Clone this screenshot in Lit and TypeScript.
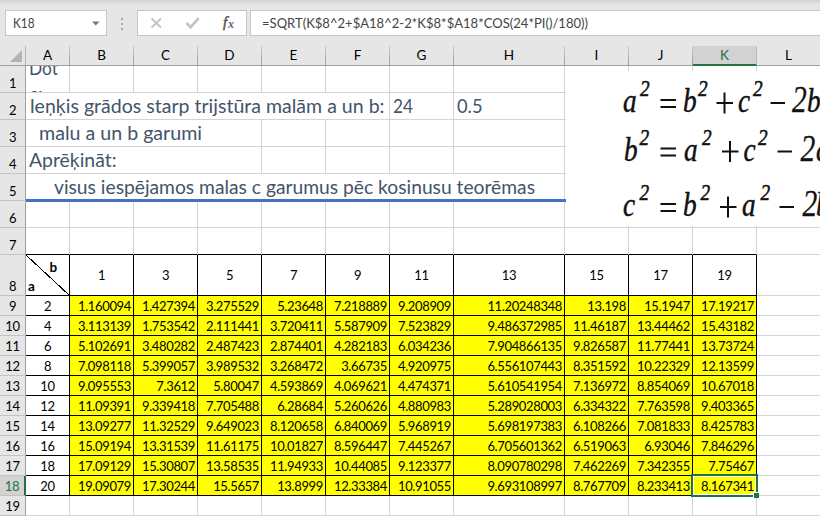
import { LitElement, html, css, svg, nothing } from "lit";
import { customElement, property } from "lit/decorators.js";

const COLS: [string, number][] = [
  ["A", 44], ["B", 64], ["C", 64], ["D", 64], ["E", 64], ["F", 64], ["G", 64],
  ["H", 111], ["I", 64], ["J", 64], ["K", 64], ["L", 64],
];

const HEAD = ["1", "3", "5", "7", "9", "11", "13", "15", "17", "19"];

const DATA = `2 1.160094 1.427394 3.275529 5.23648 7.218889 9.208909 11.20248348 13.198 15.1947 17.19217
4 3.113139 1.753542 2.111441 3.720411 5.587909 7.523829 9.486372985 11.46187 13.44462 15.43182
6 5.102691 3.480282 2.487423 2.874401 4.282183 6.034236 7.904866135 9.826587 11.77441 13.73724
8 7.098118 5.399057 3.989532 3.268472 3.66735 4.920975 6.556107443 8.351592 10.22329 12.13599
10 9.095553 7.3612 5.80047 4.593869 4.069621 4.474371 5.610541954 7.136972 8.854069 10.67018
12 11.09391 9.339418 7.705488 6.28684 5.260626 4.880983 5.289028003 6.334322 7.763598 9.403365
14 13.09277 11.32529 9.649023 8.120658 6.840069 5.968919 5.698197383 6.108266 7.081833 8.425783
16 15.09194 13.31539 11.61175 10.01827 8.596447 7.445267 6.705601362 6.519063 6.93046 7.846296
18 17.09129 15.30807 13.58535 11.94933 10.44085 9.123377 8.090780298 7.462269 7.342355 7.75467
20 19.09079 17.30244 15.5657 13.8999 12.33384 10.91055 9.693108997 8.767709 8.233413 8.167341`
  .split("\n")
  .map((r) => r.split(" "));

/** A line of text set to an exact advance width. */
@customElement("fit-text")
export class FitText extends LitElement {
  static styles = css`
    :host { display: block; flex: none; }
    svg { display: block; overflow: visible; }
    text { fill: currentColor; font: inherit; white-space: pre; }
  `;
  @property() text = "";
  @property({ type: Number }) width = 100;
  @property({ type: Number }) base = 20;

  render() {
    return html`<svg width=${this.width} height="26">
      <text x="0" y=${this.base} textLength=${this.width} lengthAdjust="spacingAndGlyphs">${this.text}</text>
    </svg>`;
  }
}

@customElement("formula-bar")
export class FormulaBar extends LitElement {
  static styles = css`
    :host {
      display: flex; height: 46px; box-sizing: border-box; padding: 10px 0 10px 5px;
      background: linear-gradient(#d2d2d2, #e6e6e6 5px);
      font: 13px Lato, "Liberation Sans", sans-serif; color: #444;
    }
    .box { box-sizing: border-box; border: 1px solid #c6c6c6; background: #fff; height: 26px; display: flex; align-items: center; }
    .name { width: 102px; padding: 0 6px 0 7px; justify-content: space-between; }
    .arrow { width: 8px; height: 5px; }
    .dots { width: 30px; display: flex; flex-direction: column; align-items: center; gap: 3px; padding-top: 8px; box-sizing: border-box; }
    .dots i { width: 2px; height: 2px; background: #a6a6a6; }
    .tools { width: 110px; }
    .input { flex: 1; margin-left: 3px; border-right: 0; padding-left: 11px; }
  `;
  render() {
    return html`
      <div class="box name">
        <fit-text text="K18" width="21.5" base="18"></fit-text>
        <svg class="arrow" viewBox="0 0 8 5"><path d="M0 0.5h7.5L3.8 4.5z" fill="#777" /></svg>
      </div>
      <div class="dots"><i></i><i></i><i></i></div>
      <div class="box tools">
        <svg width="108" height="24" fill="none">
          <path d="M13.500 7.500l9.500 9M23 7.500l-9.500 9" stroke="#c4c4c4" stroke-width="1.900" />
          <path d="M48.500 12l4.200 4.200l8-9" stroke="#c4c4c4" stroke-width="2.700" />
          <text x="85" y="15.500" font-family="Liberation Serif" font-style="italic" font-size="15" fill="#555" stroke="#555" stroke-width="0.500">f</text>
          <text x="90" y="16.500" font-family="Liberation Serif" font-style="italic" font-weight="bold" font-size="12" fill="#666">x</text>
        </svg>
      </div>
      <div class="box input">
        <fit-text text="=SQRT(K$8^2+$A18^2-2*K$8*$A18*COS(24*PI()/180))" width="326" base="18"></fit-text>
      </div>
    `;
  }
}

/** Law of cosines equations laid over the sheet. */
@customElement("cosine-picture")
export class CosinePicture extends LitElement {
  static styles = css`
    :host { display: block; background: #fff; overflow: hidden; }
    svg { display: block; }
    text { font-family: "Liberation Serif", serif; font-style: italic; fill: #111; stroke: #111; }
    .v { font-size: 34px; stroke-width: 0.5; }
    .n { font-size: 37px; stroke-width: 0.3; }
    .e { font-size: 24px; stroke-width: 0.6; }
    path { stroke: #111; stroke-width: 2; fill: none; }
  `;
  private eq(y: number, parts: [string, string, number][], ops: [string, number][]) {
    return svg`
      ${parts.map(([c, t, x]) => svg`<text class=${c}
        transform="translate(${x - 566} ${y - 71 - (c === "e" ? 16 : 0)}) scale(0.8 1)">${t}</text>`)}
      ${ops.map(([o, x]) => {
        const l = x - 566;
        const m = y - 71 - 9;
        const d = o === "=" ? `M${l} ${m - 3}h15.5M${l} ${m + 4}h15.5`
          : o === "+" ? `M${l} ${m}h16.500M${l + 8} ${m - 10.5}v21` : `M${l} ${m}h14.500`;
        return svg`<path d=${d} />`;
      })}`;
  }
  render() {
    return html`<svg width="254" height="155">
      ${this.eq(112, [["v", "a", 623], ["e", "2", 640], ["v", "b", 683], ["e", "2", 698], ["v", "c", 738], ["e", "2", 753], ["n", "2", 792], ["v", "b", 807]],
        [["=", 660.5], ["+", 716.5], ["-", 770.5]])}
      ${this.eq(160.5, [["v", "b", 624], ["e", "2", 639.5], ["v", "a", 684], ["e", "2", 702], ["v", "c", 743.5], ["e", "2", 758], ["n", "2", 800.5], ["v", "a", 816]],
        [["=", 660.5], ["+", 722], ["-", 777.5]])}
      ${this.eq(216, [["v", "c", 623], ["e", "2", 639.5], ["v", "b", 683], ["e", "2", 700.5], ["v", "a", 742], ["e", "2", 760.5], ["n", "2", 802.5], ["v", "b", 816]],
        [["=", 660.5], ["+", 720], ["-", 779.5]])}
    </svg>`;
  }
}

@customElement("app-root")
export class AppRoot extends LitElement {
  static styles = css`
    :host {
      display: block; position: relative; width: 820px; height: 516px; overflow: hidden; background: #fff;
      font: 13px Lato, "Liberation Sans", sans-serif; color: #000;
    }
    .row { display: flex; width: 846px; height: 27px; }
    .row.tall { height: 41px; }
    .row.low { height: 20px; }
    .cell, .ch, .rh { box-sizing: border-box; flex: none; }
    .cell { border-right: 1px solid #d4d4d4; border-bottom: 1px solid #d4d4d4; display: flex; overflow: hidden; }
    .head { height: 20px; background: #e6e6e6; border-bottom: 1px solid #9e9e9e; box-sizing: border-box; }
    .ch { border-right: 1px solid; border-image: linear-gradient(#cfcfcf, #989898) 1; display: flex; align-items: flex-start; justify-content: center; font-size: 13.500px; line-height: 19px; }
    .ch.on { background: #d2d2d2; color: #217346; height: 20px; border-bottom: 2px solid #217346; border-image: none; border-right-color: #bbb; }
    .corner { width: 26px; box-sizing: border-box; border-right: 1px solid #b5b5b5; display: flex; justify-content: flex-end; align-items: flex-end; padding: 0 3px 3px 0; }
    .rh {
      width: 26px; background: #e6e6e6; border-right: 1px solid #9e9e9e; border-bottom: 1px solid #c3c3c3;
      display: flex; align-items: flex-end; justify-content: center; line-height: 17px; letter-spacing: -0.350px;
    }
    .rh.on { background: #d2d2d2; color: #217346; border-right: 2px solid #217346; }
    .big { font-size: 18.500px; color: #44546a; }
    .bar { position: absolute; left: 26px; top: 199px; width: 540px; height: 3px; background: #4472c4; }
    .t { border-color: #000; }
    .mid { align-items: center; justify-content: center; letter-spacing: -0.350px; line-height: 21px; }
    .low .mid { align-items: flex-start; }
    .num { background: #ff0; justify-content: flex-end; padding-right: 2px; line-height: 21px; letter-spacing: -0.350px; }
    .pic { position: absolute; left: 566px; top: 71px; width: 254px; height: 155px; }
    .sel { position: absolute; left: 691px; top: 474px; width: 67px; height: 23px; box-sizing: border-box; border: 2px solid #217346; }
    .sel::before { content: ""; position: absolute; inset: 0; border: 1px solid #fff; }
    .sel::after { content: ""; position: absolute; right: -3px; bottom: -3px; width: 5px; height: 5px; background: #217346; border: 1px solid #fff; border-right: 0; border-bottom: 0; }
    .diag { display: block; font-weight: bold; }
  `;

  private rh(n: number) {
    return html`<div class="rh ${n === 18 ? "on" : ""}">${n}</div>`;
  }

  /** Plain cells covering columns from..to. */
  private blanks(from: number, to = 11) {
    return COLS.slice(from, to + 1).map(([, w]) => html`<div class="cell" style="width:${w}px"></div>`);
  }

  /** Text that runs over several columns. */
  private span(from: number, to: number, pad: number, text: string, width: number) {
    const w = COLS.slice(from, to + 1).reduce((s, c) => s + c[1], 0);
    return html`<div class="cell big" style="width:${w}px;padding-left:${pad}px">
      ${text ? html`<fit-text .text=${text} .width=${width}></fit-text>` : nothing}
    </div>`;
  }

  render() {
    return html`
      <formula-bar></formula-bar>
      <div class="row head">
        <div class="corner"><svg width="12" height="12"><path d="M12 0V12H0z" fill="#b3b3b3" /></svg></div>
        ${COLS.map(([n, w]) => html`<div class="ch ${n === "K" ? "on" : ""}" style="width:${w}px">${n}</div>`)}
      </div>
      <div class="row">${this.rh(1)}
        <div class="cell big" style="width:44px;padding-left:4px">
          <svg width="38" height="26"><text x="-1" y="8.500" font-size="18.500" fill="#44546a" textLength="29" lengthAdjust="spacingAndGlyphs">Dot</text>
          <text x="0" y="35" font-size="18.500" fill="#44546a">s:</text></svg>
        </div>${this.blanks(1)}</div>
      <div class="row">${this.rh(2)}${this.span(0, 5, 4, "leņķis grādos starp trijstūra malām a un b:", 354.5)}
        ${this.span(6, 6, 3, "24", 20)}${this.span(7, 7, 3, "0.5", 25.5)}${this.blanks(8)}</div>
      <div class="row">${this.rh(3)}${this.span(0, 3, 13, "malu a un b garumi", 163)}${this.blanks(4)}</div>
      <div class="row">${this.rh(4)}${this.span(0, 3, 3, "Aprēķināt:", 87.5)}${this.blanks(4)}</div>
      <div class="row">${this.rh(5)}${this.span(0, 7, 28, "visus iespējamos malas c garumus pēc kosinusu teorēmas", 481)}${this.blanks(8)}</div>
      <div class="row">${this.rh(6)}${this.blanks(0)}</div>
      <div class="row">${this.rh(7)}
        ${COLS.map(([n, w]) => html`<div class="cell" style="width:${w}px;border-bottom-color:${n === "L" ? "#d4d4d4" : "#000"}"></div>`)}</div>
      <div class="row tall">${this.rh(8)}
        <div class="cell t diag" style="width:44px"><svg width="43" height="40">
          <path d="M0 0L43 40" stroke="#000" shape-rendering="crispEdges" />
          <text x="23.500" y="16.500" font-size="13.500">b</text><text x="2" y="36" font-size="13.500">a</text></svg></div>
        ${HEAD.map((h, i) => html`<div class="cell t mid" style="width:${COLS[i + 1][1]}px">${h}</div>`)}${this.blanks(11)}</div>
      ${DATA.map((r, n) => html`<div class="row low">${this.rh(n + 9)}
        ${r.map((v, i) => html`<div class="cell t ${i ? "num" : "mid"}" style="width:${COLS[i][1]}px">${v}</div>`)}${this.blanks(11)}</div>`)}
      <div class="row low">${this.rh(19)}${this.blanks(0)}</div>
      <div class="bar"></div>
      <cosine-picture class="pic"></cosine-picture>
      <div class="sel"></div>
    `;
  }
}
